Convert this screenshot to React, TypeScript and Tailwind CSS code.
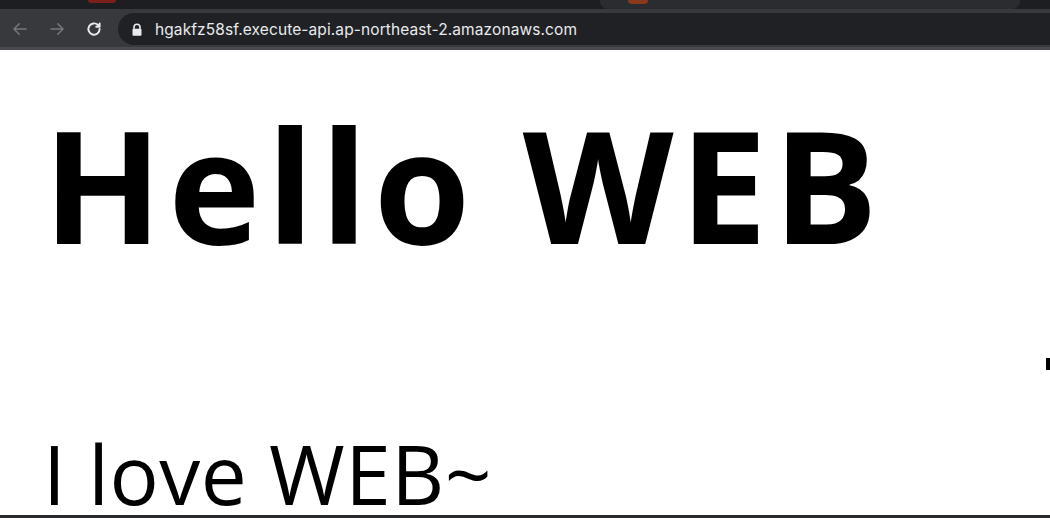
import React from "react";

export default function App() {
  return (
    <div className="w-[1050px] h-[518px] overflow-hidden bg-white relative flex flex-col">
      {/* tab strip */}
      <div className="h-[9px] bg-[#1d1e21] relative shrink-0">
        <div className="absolute left-[88px] top-0 w-[28px] h-[3px] bg-[#7a1f1a] rounded-b" />
        <div className="absolute left-[600px] top-0 w-[420px] h-[9px] bg-[#2b2c2f] rounded-b-[8px]" />
        <div className="absolute left-[628px] top-0 w-[20px] h-[4px] bg-[#8a3a1a] rounded-b" />
      </div>
      {/* toolbar */}
      <div className="h-[41px] bg-[#38393c] flex items-center shrink-0 border-b-[3px] border-[#4a4b4e] relative">
        <div className="flex items-center gap-[19px] pl-[11px] mt-[2px]">
          <svg width="18" height="18" viewBox="0 0 24 24" fill="none" stroke="#76777a" strokeWidth="2" strokeLinecap="round" strokeLinejoin="round">
            <path d="M20 12H4M11 5l-7 7 7 7" />
          </svg>
          <svg width="18" height="18" viewBox="0 0 24 24" fill="none" stroke="#76777a" strokeWidth="2" strokeLinecap="round" strokeLinejoin="round">
            <path d="M4 12h16M13 5l7 7-7 7" />
          </svg>
          <svg width="18" height="18" viewBox="0 0 24 24" fill="none" stroke="#e8eaed" strokeWidth="2.6" strokeLinecap="round" strokeLinejoin="round">
            <path d="M19.5 12a7.5 7.5 0 1 1-2.2-5.3" />
            <path d="M19.5 4.5v4.5H15" fill="#e8eaed" />
          </svg>
        </div>
        <div className="absolute left-[118px] top-[4px] right-0 h-[32px] bg-[#202124] rounded-l-full flex items-center pl-[13px]">
          <svg width="12" height="13" viewBox="0 0 12 13" fill="#e8eaed">
            <path d="M3 6V4.2a3 3 0 0 1 6 0V6" fill="none" stroke="#e8eaed" strokeWidth="1.6" />
            <rect x="1.5" y="5.8" width="9" height="7" rx="1" />
          </svg>
          <span className="ml-[12px] text-[15.5px] text-[#e8eaed] font-['Inter',sans-serif] tracking-[0.1px] mt-[2px]">
            hgakfz58sf.execute-api.ap-northeast-2.amazonaws.com
          </span>
        </div>
      </div>
      {/* page */}
      <div className="flex-1 flex flex-col pl-[43px] font-['Open_Sans','Noto_Sans',sans-serif] text-black">
        <h1 className="text-[156px] font-bold leading-none mt-[56px] tracking-[6px]">Hello WEB</h1>
        <p className="text-[82px] leading-[82px] mt-[170px] tracking-[0.5px]">I love WEB~</p>
      </div>
      <div className="absolute left-[1046px] top-[358px] w-[4px] h-[12px] bg-black" />
      <div className="absolute left-0 bottom-0 w-full h-[3px] bg-[#2a2b2e]" />
    </div>
  );
}
